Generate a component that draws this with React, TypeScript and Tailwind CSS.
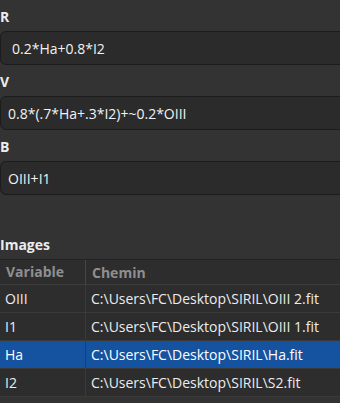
const rows = [
  { v: "OIII", path: "C:\\Users\\FC\\Desktop\\SIRIL\\OIII 2.fit" },
  { v: "I1", path: "C:\\Users\\FC\\Desktop\\SIRIL\\OIII 1.fit" },
  { v: "Ha", path: "C:\\Users\\FC\\Desktop\\SIRIL\\Ha.fit", selected: true },
  { v: "I2", path: "C:\\Users\\FC\\Desktop\\SIRIL\\S2.fit" },
];

function Field({ label, value, pad }: { label: string; value: string; pad: string }) {
  return (
    <div>
      <div className="h-[31px] pt-[7px] text-[14px] font-bold leading-[20px] text-[#ececec]">{label}</div>
      <div
        className={`flex h-[34px] w-[360px] items-center rounded-[6px] border border-[#1c1c1c] bg-[#2b2b2b] text-[14px] text-[#f2f2f2] ${pad}`}
      >
        {value}
      </div>
    </div>
  );
}

export default function App() {
  return (
    <div
      className="h-[403px] w-[340px] overflow-hidden bg-[#333333]"
      style={{ fontFamily: '"Open Sans", "Noto Sans", sans-serif' }}
    >
      <Field label="R" value="0.2*Ha+0.8*I2" pad="pl-[11px]" />
      <Field label="V" value="0.8*(.7*Ha+.3*I2)+~0.2*OIII" pad="pl-[7px]" />
      <Field label="B" value="OIII+I1" pad="pl-[7px]" />

      <div className="mt-[36px] h-[28px] pt-[4px] text-[14px] font-bold leading-[20px] text-[#ececec]">Images</div>

      <div className="w-[360px] border-t border-[#222222] bg-[#2d2d2d] text-[14px]">
        <div className="flex h-[25px] items-center border-b border-[#3e3e3e] font-bold text-[#8f8f8f]">
          <div className="h-full w-[86px] border-r border-[#464646] pl-[6px] leading-[24px]">Variable</div>
          <div className="pl-[6px]">Chemin</div>
        </div>
        {rows.map((r) => (
          <div
            key={r.v}
            className={`flex h-[28px] items-center border-b border-[#3a3a3a] ${
              r.selected ? "bg-[#1553a0] text-white" : "text-[#ececec]"
            }`}
          >
            <div className="flex h-full w-[86px] items-center border-r border-[#3a3a3a] pl-[5px]">{r.v}</div>
            <div className="pl-[5px]">{r.path}</div>
          </div>
        ))}
      </div>
    </div>
  );
}
